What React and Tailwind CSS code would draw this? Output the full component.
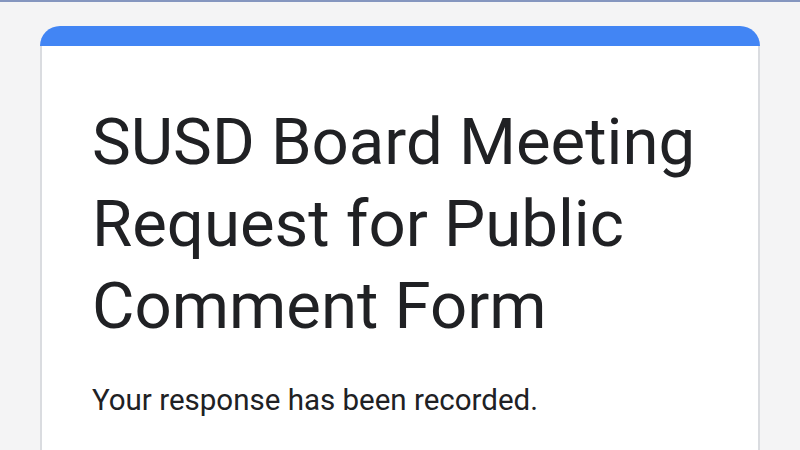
export default function App() {
  return (
    <div
      className="h-[450px] w-[800px] overflow-hidden bg-[#f4f4f5] border-t-2 border-[#8596bf]"
      style={{ fontFamily: 'Roboto, "Noto Sans", sans-serif' }}
    >
      <div className="mx-[40px] mt-[24px]">
        {/* Form card with its coloured header strip */}
        <div className="rounded-t-[20px] overflow-hidden">
          <div className="h-[20px] bg-[#4285f4]" />
          <div className="bg-white border-x-2 border-[#dadce0] pl-[50px] pr-[40px] pt-[55px] pb-[40px] h-[420px]">
            <h1 className="text-[65.3px] leading-[82px] font-normal text-[#202124] tracking-normal">
              SUSD Board Meeting Request for Public Comment Form
            </h1>
            <p className="mt-[33px] text-[29.5px] leading-[40px] text-[#202124]">
              Your response has been recorded.
            </p>
          </div>
        </div>
      </div>
    </div>
  );
}
